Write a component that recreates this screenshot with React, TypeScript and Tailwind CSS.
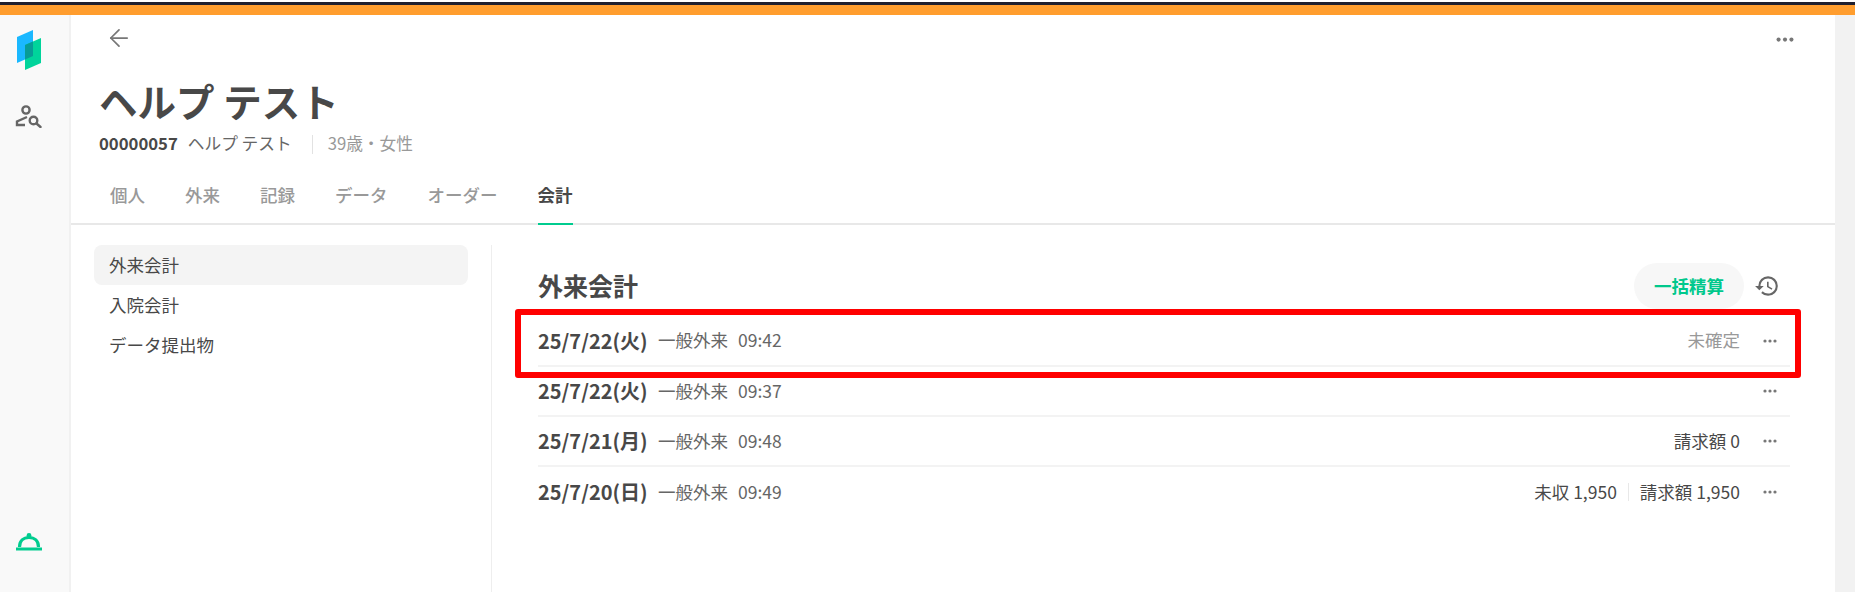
import { ArrowLeft } from "lucide-react";
import { MdHistory } from "react-icons/md";

const font = { fontFamily: '"Noto Sans CJK JP", "Noto Sans", sans-serif' };

const tabs = ["個人", "外来", "記録", "データ", "オーダー", "会計"];
const menu = ["外来会計", "入院会計", "データ提出物"];

const rows = [
  { date: "25/7/22(火)", time: "09:42", status: "未確定" },
  { date: "25/7/22(火)", time: "09:37" },
  { date: "25/7/21(月)", time: "09:48", billed: "請求額 0" },
  { date: "25/7/20(日)", time: "09:49", unpaid: "未収 1,950", billed: "請求額 1,950" },
];

function Dots({ size = 14 }: { size?: number }) {
  return (
    <svg width={size} height={(size * 4) / 14} viewBox="0 0 14 4" fill="#777">
      <circle cx="2" cy="2" r="1.6" />
      <circle cx="7" cy="2" r="1.6" />
      <circle cx="12" cy="2" r="1.6" />
    </svg>
  );
}

function Logo() {
  return (
    <svg width="26" height="42" viewBox="0 0 26 42">
      <path d="M1 8 L17 1 V27 L1 34 Z" fill="#1ab8ff" />
      <path d="M9 16 L25 9 V34 L9 41 Z" fill="#00d49b" />
      <path d="M9 16 L17 12.5 V27 L9 30.5 Z" fill="#079c96" />
    </svg>
  );
}

function PersonSearch() {
  return (
    <svg width="27" height="23" viewBox="0 0 27 23" fill="none" stroke="#666" strokeWidth="2.4">
      <circle cx="11" cy="5" r="3.6" />
      <path d="M12 12 L2 16.5 V20 H10" />
      <circle cx="18.5" cy="15.5" r="3.8" />
      <path d="M21.5 18.5 L25.5 22" strokeLinecap="round" />
    </svg>
  );
}

function Bell() {
  return (
    <svg width="26" height="18" viewBox="0 0 26 18" fill="none">
      <circle cx="13" cy="2.5" r="2.4" fill="#00cc8f" />
      <path d="M3.5 14 C3.5 8 7.5 4.5 13 4.5 C18.5 4.5 22.5 8 22.5 14" stroke="#00cc8f" strokeWidth="3.2" />
      <path d="M0 16 H26" stroke="#00cc8f" strokeWidth="3" />
    </svg>
  );
}

export default function App() {
  return (
    <div className="w-[1862px] h-[601px] bg-white overflow-hidden" style={font}>
      <div className="flex h-[592px] w-[1855px] flex-col pt-[2px]">
        <div className="h-[3px] shrink-0 bg-[#1f1f2e]" />
        <div className="h-[10px] shrink-0 bg-[#ff9d2e]" />
        <div className="flex min-h-0 flex-1">
          <aside className="flex w-[71px] shrink-0 flex-col items-center border-r-2 border-[#f1f1f1] bg-[#f9f9f9] pt-[14px] pb-[41px] pr-[12px]">
            <Logo />
            <div className="mt-[34px]">
              <PersonSearch />
            </div>
            <div className="mt-auto">
              <Bell />
            </div>
          </aside>

          <main className="flex min-w-0 flex-1 flex-col">
            <div className="relative flex h-[39px] shrink-0 items-center pl-[34px] pt-[7px]">
              <ArrowLeft size={28} strokeWidth={1.5} color="#777" />
              <div className="absolute right-[41px] top-[22px]">
                <Dots size={18} />
              </div>
            </div>

            <div className="pl-[28px]">
              <h1 className="mt-[24px] text-[38.5px] font-bold leading-[44px] text-[#484848]">ヘルプ テスト</h1>
              <div className="mt-[10px] flex h-[24px] items-center text-[16.7px]">
                <span className="font-bold text-[#484848]">00000057</span>
                <span className="ml-[10px] text-[#666]">ヘルプ テスト</span>
                <span className="ml-[20px] h-[19px] w-px bg-[#e2e2e2]" />
                <span className="ml-[15px] text-[#999]">39歳・女性</span>
              </div>
            </div>

            <nav className="mt-[14px] flex h-[55px] shrink-0 items-stretch gap-[40px] border-b-2 border-[#e8e8e8] pl-[39px]">
              {tabs.map((tab) => {
                const active = tab === "会計";
                return (
                  <div
                    key={tab}
                    className={
                      active
                        ? "-mb-[2px] flex items-center border-b-2 border-[#00cc8f] pb-[2px] text-[17.5px] font-bold text-[#484848]"
                        : "flex items-center pb-[2px] text-[17.5px] font-medium text-[#999]"
                    }
                  >
                    {tab}
                  </div>
                );
              })}
            </nav>

            <div className="flex min-h-0 flex-1">
              <div className="w-[420px] shrink-0 pl-[23px] pr-[23px] pt-[20px]">
                {menu.map((item, i) => (
                  <div
                    key={item}
                    className={
                      i === 0
                        ? "flex h-[40px] items-center rounded-lg bg-[#f4f4f4] pl-[15px] text-[17.5px] text-[#484848]"
                        : "flex h-[40px] items-center rounded-lg pl-[15px] text-[17.5px] text-[#484848]"
                    }
                  >
                    {item}
                  </div>
                ))}
              </div>

              <div className="mt-[20px] flex-1 border-l border-[#eeeeee] pl-[46px] pr-[45px] pt-[20px]">
                <div className="flex h-[51px] items-start justify-between">
                  <h2 className="mt-[2px] text-[25px] font-bold leading-[36px] text-[#484848]">外来会計</h2>
                  <div className="-mt-[2px] flex items-center">
                    <button className="h-[46px] w-[110px] rounded-full bg-[#f7f7f7] text-[17.5px] font-bold text-[#00c88c]">
                      一括精算
                    </button>
                    <MdHistory size={26} color="#666" className="ml-[10px] mr-[10px]" />
                  </div>
                </div>

                <div className="relative">
                  {rows.map((row, i) => (
                    <div
                      key={i}
                      className={
                        i === 0
                          ? "flex h-[51px] items-center border-b-2 border-[#f3f3f3] text-[17.5px]"
                          : i < rows.length - 1
                            ? "flex h-[50px] items-center border-b-2 border-[#f3f3f3] text-[17.5px]"
                            : "flex h-[50px] items-center text-[17.5px]"
                      }
                    >
                      <span className="w-[120px] text-[20px] font-bold text-[#484848]">{row.date}</span>
                      <span className="text-[#666]">一般外来</span>
                      <span className="ml-[10px] text-[#666]">{row.time}</span>
                      <div className="ml-auto flex items-center pr-[13px]">
                        {row.status && <span className="text-[#999]">{row.status}</span>}
                        {row.unpaid && <span className="text-[#484848]">{row.unpaid}</span>}
                        {row.unpaid && <span className="mx-[11px] h-[18px] w-px bg-[#e8e8e8]" />}
                        {row.billed && <span className="text-[#484848]">{row.billed}</span>}
                        <span className="ml-[23px] flex">
                          <Dots />
                        </span>
                      </div>
                    </div>
                  ))}
                  <div className="absolute -left-[23px] -right-[11px] -top-[7px] h-[69px] rounded-[3px] border-[6px] border-[#ff0000]" />
                </div>
              </div>
            </div>
          </main>

          <div className="w-[20px] shrink-0 bg-[#f2f2f2]" />
        </div>
      </div>
    </div>
  );
}
